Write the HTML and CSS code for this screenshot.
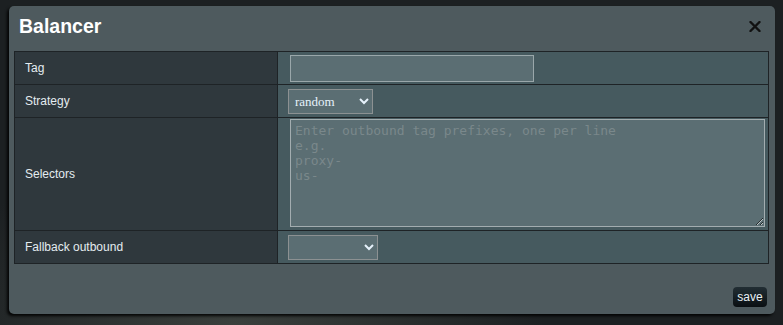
FILE: index.html
```html
<!DOCTYPE html>
<html lang="en">
<head>
    <meta charset="UTF-8">
    <title>Balancer</title>
    <link rel="stylesheet" href="styles.css">
</head>
<body>
    <div class="dialog">
        <div class="dialog-header">
            <h1>Balancer</h1>
            <span class="close">
                <svg width="12" height="11" viewBox="0 0 12 11">
                    <path d="M1.5 1 L10.5 10 M10.5 1 L1.5 10" stroke="#111" stroke-width="2.4" stroke-linecap="round"/>
                </svg>
            </span>
        </div>

        <table class="form-table">
            <tr class="row">
                <td class="label">Tag</td>
                <td class="value"><input type="text" class="text-input"></td>
            </tr>
            <tr class="row">
                <td class="label">Strategy</td>
                <td class="value">
                    <select class="select strategy">
                        <option>random</option>
                    </select>
                </td>
            </tr>
            <tr class="row tall">
                <td class="label">Selectors</td>
                <td class="value">
                    <textarea class="selectors" placeholder="Enter outbound tag prefixes, one per line&#10;e.g.&#10;proxy-&#10;us-"></textarea>
                </td>
            </tr>
            <tr class="row">
                <td class="label">Fallback outbound</td>
                <td class="value">
                    <select class="select fallback">
                        <option></option>
                    </select>
                </td>
            </tr>
        </table>

        <div class="dialog-footer">
            <button class="save">save</button>
        </div>
    </div>
</body>
</html>
```

FILE: styles.css
```css
* {
    margin: 0;
    padding: 0;
    box-sizing: border-box;
}

body {
    background: radial-gradient(ellipse at 30% 100%, #3a3f3c 0%, #1c2022 40%),
                #23282a;
    height: 325px;
    overflow: hidden;
    font-family: 'Liberation Sans', Arial, sans-serif;
}

.dialog {
    margin: 6px 0 0 9px;
    width: 766px;
    height: 308px;
    background: #4e5a5e;
    border-radius: 5px;
    box-shadow: -2px 2px 3px rgba(0,0,0,0.9);
    display: flex;
    flex-direction: column;
}

.dialog-header {
    height: 45px;
    padding: 8px 14px 0 10px;
    display: flex;
    justify-content: space-between;
    align-items: flex-start;
}

.dialog-header h1 {
    color: #fff;
    font-size: 19.5px;
    line-height: 24px;
    font-weight: bold;
}

.close {
    margin-top: 7px;
    display: flex;
}

.form-table {
    margin: 0 5px;
    width: 755px;
    border-collapse: collapse;
    border: 1px solid #1e2326;
}

.form-table td {
    border: 1px solid #1e2326;
    vertical-align: middle;
}

.row td {
    height: 33px;
}

.row.tall td {
    height: 113px;
}

.label {
    width: 263px;
    background: #2f383d;
    color: #e4ecf0;
    font-size: 12px;
    padding-left: 10px;
}

.value {
    background: #465a5f;
    padding-left: 10px;
}

.text-input {
    display: block;
    margin-left: 2px;
    width: 244px;
    height: 27px;
    background: #5b6e73;
    border: 1px solid #9aa7aa;
}

.select {
    display: block;
    height: 25px;
    background: #5b6e73;
    border: 1px solid #8c9192;
    color: #e6f2fb;
    font-family: 'Liberation Serif', 'Times New Roman', serif;
    font-size: 13px;
    padding-left: 2px;
}

.strategy {
    width: 85px;
}

.fallback {
    width: 90px;
}

.selectors {
    display: block;
    margin: 1px 0 3px 2px;
    width: 475px;
    height: 108px;
    background: #5b6e73;
    border: 1px solid #a3adb0;
    padding: 3px 4px;
    font-family: 'DejaVu Sans Mono', monospace;
    font-size: 13px;
    line-height: 15px;
    resize: vertical;
}

.selectors::placeholder {
    color: #7a888b;
}

.dialog-footer {
    flex: 1;
    display: flex;
    justify-content: flex-end;
    align-items: flex-end;
    padding: 0 8px 7px 0;
}

.save {
    width: 34px;
    height: 20px;
    border: none;
    border-radius: 4px;
    background: linear-gradient(#222e34, #0a0f12);
    color: #e8f0f5;
    font-family: 'Liberation Sans', Arial, sans-serif;
    font-size: 12px;
    cursor: pointer;
}
```
